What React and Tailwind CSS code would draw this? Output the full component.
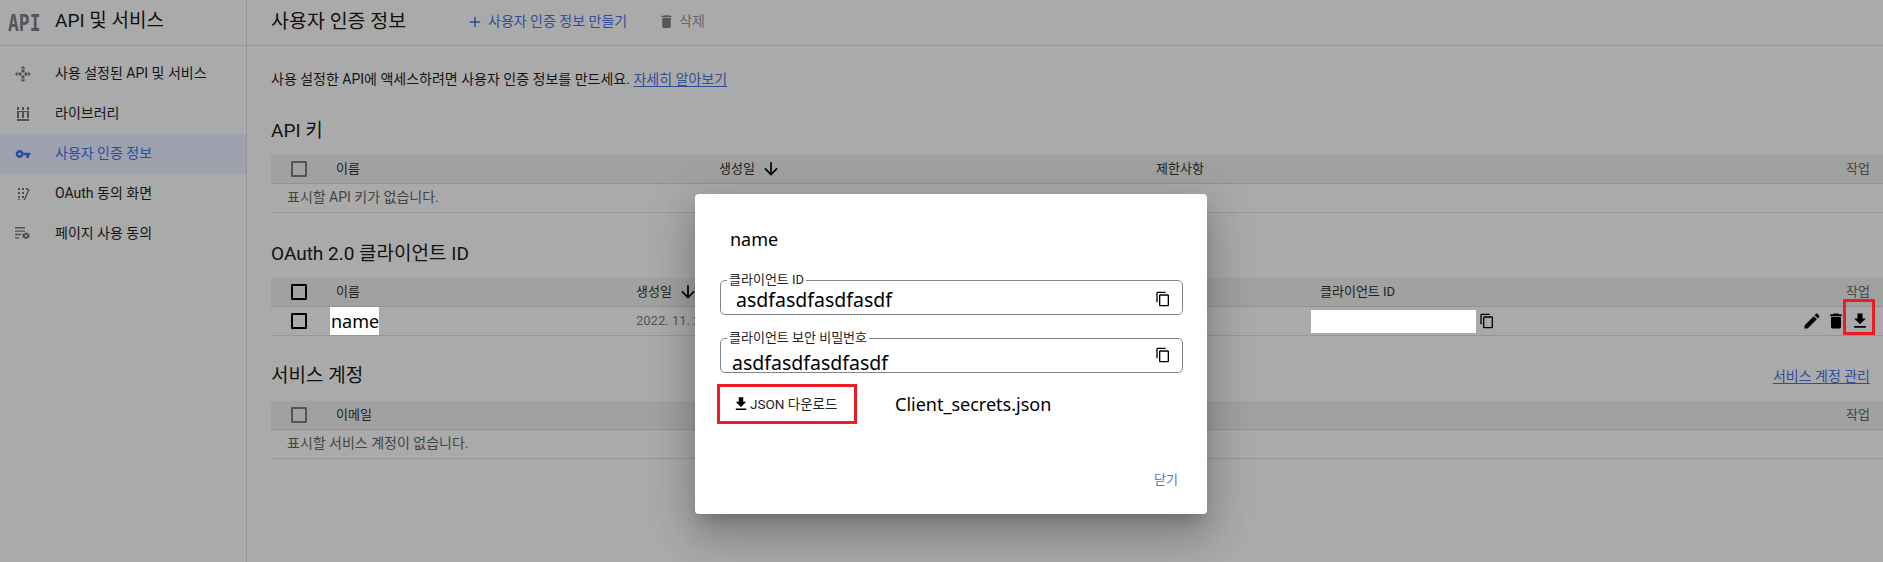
const KR = 'font-["Roboto","Noto_Sans_CJK_KR",sans-serif]'

function MdIcon({ d, className }) {
  return (
    <svg viewBox="0 0 24 24" fill="currentColor" className={className}>
      <path d={d} />
    </svg>
  )
}

const ICONS = {
  add: 'M19 13h-6v6h-2v-6H5v-2h6V5h2v6h6v2z',
  trash: 'M6 19c0 1.1.9 2 2 2h8c1.1 0 2-.9 2-2V7H6v12zM19 4h-3.5l-1-1h-5l-1 1H5v2h14V4z',
  edit: 'M3 17.25V21h3.75L17.81 9.94l-3.75-3.75L3 17.25zM20.71 7.04c.39-.39.39-1.02 0-1.41l-2.34-2.34c-.39-.39-1.02-.39-1.41 0l-1.83 1.83 3.75 3.75 1.83-1.83z',
  download: 'M19 9h-4V3H9v6H5l7 7 7-7zM5 18v2h14v-2H5z',
  copy: 'M16 1H4c-1.1 0-2 .9-2 2v14h2V3h12V1zm3 4H8c-1.1 0-2 .9-2 2v14c0 1.1.9 2 2 2h11c1.1 0 2-.9 2-2V7c0-1.1-.9-2-2-2zm0 16H8V7h11v14z',
  down: 'M20 12l-1.41-1.41L13 16.17V4h-2v12.17l-5.58-5.59L4 12l8 8 8-8z',
  key: 'M12.65 10C11.83 7.67 9.61 6 7 6c-3.31 0-6 2.69-6 6s2.69 6 6 6c2.61 0 4.83-1.67 5.65-4H17v4h4v-4h2v-4H12.65zM7 14c-1.1 0-2-.9-2-2s.9-2 2-2 2 .9 2 2-.9 2-2 2z',
}

function ApiIcon() {
  return (
    <svg viewBox="0 0 16 16" fill="#505050" className="w-4 h-4">
      <path d="M8 0l2.6 2.6H5.4zM8 16l-2.6-2.6h5.2zM0 8l2.6-2.6v5.2zM16 8l-2.6 2.6V5.4z" />
      <circle cx="8" cy="5" r="1.7" />
      <circle cx="8" cy="11" r="1.7" />
      <circle cx="5" cy="8" r="1.7" />
      <circle cx="11" cy="8" r="1.7" />
    </svg>
  )
}

function LibraryIcon() {
  return (
    <svg viewBox="0 0 12 14" fill="#505050" className="w-3 h-[14px] ml-0.5">
      <path d="M0 0h2v3H0zM5 0h2v3H5zM10 0h2v3h-2zM0 4h12v1H0zM0 5h2v6H0zM5 5h2v6H5zM10 5h2v6h-2zM0 12h12v2H0z" />
    </svg>
  )
}

function ConsentIcon() {
  return (
    <svg viewBox="0 0 14 14" fill="#505050" className="w-[14px] h-[14px] ml-0.5">
      <path d="M1 1h2v2H1zM5 1h2v2H5zM9 1h2v2H9zM1 5h2v2H1zM5 5h2v2H5zM1 9h2v2H1zM5 9h2v2H5zM1 12h2v1H1z" />
      <path d="M13 2l-5 11H6.5l5-11z" />
    </svg>
  )
}

function PageSettingsIcon() {
  return (
    <svg viewBox="0 0 16 16" fill="#505050" className="w-4 h-4">
      <path d="M0 1h10v1.4H0zM0 4.4h10v1.4H0zM0 7.8h6v1.4H0zM0 11.2h4v1.4H0z" />
      <path fillRule="evenodd" d="M11 6.5l1.4.3.3 1.2 1.2-.4 1 1.2-.8 1 .8 1-1 1.2-1.2-.4-.3 1.2-1.4.3-1.4-.3-.3-1.2-1.2.4-1-1.2.8-1-.8-1 1-1.2 1.2.4.3-1.2zM11 8.7a1.1 1.1 0 100 2.2 1.1 1.1 0 000-2.2z" />
    </svg>
  )
}

function Checkbox({ dark }) {
  return (
    <span className={`block w-4 h-4 rounded-[1px] border-2 ${dark ? 'border-black' : 'border-[#555]'}`} />
  )
}

function NavItem({ icon, label, active }) {
  return (
    <div className={`h-10 flex items-center ${active ? 'bg-[#9da2ae] text-[#2b4c9f]' : 'text-[#151515]'}`}>
      <span className="w-[55px] pl-[15px] flex items-center">{icon}</span>
      <span className="text-[14px] pb-0.5">{label}</span>
    </div>
  )
}

function SectionTitle({ children, right, className = '' }) {
  return (
    <div className="h-[37px] flex justify-between items-start pr-[13px]">
      <h2 className={`text-[19px] leading-6 font-normal text-[#111] ${className}`}>{children}</h2>
      {right}
    </div>
  )
}

function HeaderRow({ columns, cells, dark }) {
  return (
    <div className={`grid ${columns} h-[29px] items-center bg-[#a1a1a1] border-b border-[#929292] pr-[13px] text-[13px] text-[#222]`}>
      <span className="pl-5"><Checkbox dark={dark} /></span>
      {cells}
      <span className="text-[#444] text-right">작업</span>
    </div>
  )
}

function EmptyRow({ children }) {
  return (
    <div className="h-[29px] flex items-center pl-4 pb-0.5 border-b border-[#979797] text-[14px] text-[#444]">{children}</div>
  )
}

function SortLabel() {
  return (
    <span className="flex items-center gap-1.5">
      생성일 <MdIcon d={ICONS.down} className="w-5 h-5 text-black" />
    </span>
  )
}

function SecretField({ label, value, valueClass, iconClass, className }) {
  return (
    <fieldset className={`h-[41px] w-[463px] border border-[#80868b] rounded-[5px] pl-[6px] relative ${className}`}>
      <legend className="text-[13px] leading-[12px] px-[2px] text-[#222]">{label}</legend>
      <span className={`absolute text-[19.5px] leading-6 text-black font-["Noto_Sans",sans-serif] ${valueClass}`}>{value}</span>
      <MdIcon d={ICONS.copy} className={`absolute right-[11px] w-4 h-4 text-black ${iconClass}`} />
    </fieldset>
  )
}

export default function App() {
  return (
    <div className={`${KR} relative w-[1883px] h-[562px] overflow-hidden bg-[#aaaaaa] flex`}>
      <aside className="w-[247px] shrink-0 border-r border-[#969696]">
        <div className="h-[46px] border-b border-[#969696] flex items-center">
          <span className="w-[55px] pl-2 font-['DejaVu_Sans_Mono',monospace] font-bold text-[18px] text-[#555] scale-y-125 origin-center">API</span>
          <span className="text-[19px] text-[#111] pb-0.5">API 및 서비스</span>
        </div>
        <nav className="pt-2">
          <NavItem icon={<ApiIcon />} label="사용 설정된 API 및 서비스" />
          <NavItem icon={<LibraryIcon />} label="라이브러리" />
          <NavItem icon={<MdIcon d={ICONS.key} className="w-4 h-4 text-[#2b4c9f]" />} label="사용자 인증 정보" active />
          <NavItem icon={<ConsentIcon />} label="OAuth 동의 화면" />
          <NavItem icon={<PageSettingsIcon />} label="페이지 사용 동의" />
        </nav>
      </aside>

      <main className="flex-1 min-w-0">
        <header className="h-[46px] border-b border-[#969696] flex items-center pl-6">
          <h1 className="w-[200px] text-[19.5px] font-normal text-[#111] pb-0.5">사용자 인증 정보</h1>
          <span className="flex items-center text-[#2f4e9c] text-[14px] pb-0.5">
            <MdIcon d={ICONS.add} className="w-[18px] h-[18px] -ml-[5px] mr-1" />
            사용자 인증 정보 만들기
          </span>
          <span className="flex items-center text-[#666] text-[14px] ml-[31px] pb-0.5">
            <MdIcon d={ICONS.trash} className="w-[17px] h-[17px] text-[#555] mr-1" />
            삭제
          </span>
        </header>

        <div className="pl-6">
          <p className="h-5 mt-[23px] mb-[29px] text-[14px] leading-5 text-[#151515]">
            사용 설정한 API에 액세스하려면 사용자 인증 정보를 만드세요.{' '}
            <a className="text-[#2f4e9c] underline underline-offset-2">자세히 알아보기</a>
          </p>

          <section>
            <SectionTitle className="pt-px">API 키</SectionTitle>
            <HeaderRow
              columns="grid-cols-[65px_383px_437px_1fr_60px]"
              cells={<><span>이름</span><SortLabel /><span>제한사항</span></>}
            />
            <EmptyRow>표시할 API 키가 없습니다.</EmptyRow>
          </section>

          <section className="mt-7">
            <SectionTitle className="pt-px">OAuth 2.0 클라이언트 ID</SectionTitle>
            <HeaderRow
              dark
              columns="grid-cols-[65px_300px_684px_1fr_60px]"
              cells={<><span>이름</span><SortLabel /><span>클라이언트 ID</span></>}
            />
            <div className="grid grid-cols-[59px_306px_675px_1fr] h-[29px] items-center border-b border-[#979797] pr-[13px]">
              <span className="pl-5"><Checkbox dark /></span>
              <span><span className="inline-block h-7 w-[49px] bg-white text-black text-[18px] leading-7 font-['Noto_Sans',sans-serif] pl-px">name</span></span>
              <span className="text-[13px] text-[#555]">2022. 11. 2</span>
              <div className="flex items-center justify-between">
                <span className="flex items-center">
                  <span className="h-[23px] w-[165px] bg-white" />
                  <MdIcon d={ICONS.copy} className="w-4 h-4 text-black ml-[3px]" />
                </span>
                <span className="flex items-center gap-[4px] text-black">
                  <MdIcon d={ICONS.edit} className="w-5 h-5" />
                  <MdIcon d={ICONS.trash} className="w-5 h-5" />
                  <MdIcon d={ICONS.download} className="w-5 h-5" />
                </span>
              </div>
            </div>
          </section>

          <section className="mt-7">
            <SectionTitle right={<a className="text-[14px] leading-[18px] mt-[3px] text-[#2f4e9c] underline underline-offset-2">서비스 계정 관리</a>}>서비스 계정</SectionTitle>
            <HeaderRow
              columns="grid-cols-[65px_1fr_60px]"
              cells={<span>이메일</span>}
            />
            <EmptyRow>표시할 서비스 계정이 없습니다.</EmptyRow>
          </section>
        </div>
      </main>

      {/* highlight round the download icon in the table */}
      <div className="absolute left-[1843px] top-[299px] w-8 h-9 border-[3px] border-[#ed1c24]" />

      {/* dialog */}
      <div className="absolute left-[695px] top-[194px] w-[512px] h-[320px] bg-white rounded-[4px] shadow-[0_11px_15px_-7px_rgba(0,0,0,.2),0_24px_38px_3px_rgba(0,0,0,.14),0_9px_46px_8px_rgba(0,0,0,.12)] pl-[25px] flex flex-col">
        <div className="mt-[33px] ml-[10px] h-6 text-[18px] leading-6 text-black font-['Noto_Sans',sans-serif]">name</div>
        <SecretField className="mt-[23px]" label="클라이언트 ID" value="asdfasdfasdfasdf" valueClass="top-[2px] left-[15px]" iconClass="top-[5px]" />
        <SecretField className="mt-[17px]" label="클라이언트 보안 비밀번호" value="asdfasdfasdfasdf" valueClass="top-[7px] left-[11px]" iconClass="top-[3px]" />
        <div className="mt-[11px] -ml-[3px] flex items-center">
          <div className="w-[140px] h-10 border-[3px] border-[#ed1c24] flex items-center pl-[12px] text-[13.5px] text-[#222]">
            <MdIcon d={ICONS.download} className="w-[18px] h-[18px] text-black" />
            JSON 다운로드
          </div>
          <span className="ml-[38px] text-[18px] text-black font-['Noto_Sans',sans-serif]">Client_secrets.json</span>
        </div>
        <div className="mt-[46px] pr-[29px] text-right text-[13px] text-[#4a76d8]">닫기</div>
      </div>
    </div>
  )
}
